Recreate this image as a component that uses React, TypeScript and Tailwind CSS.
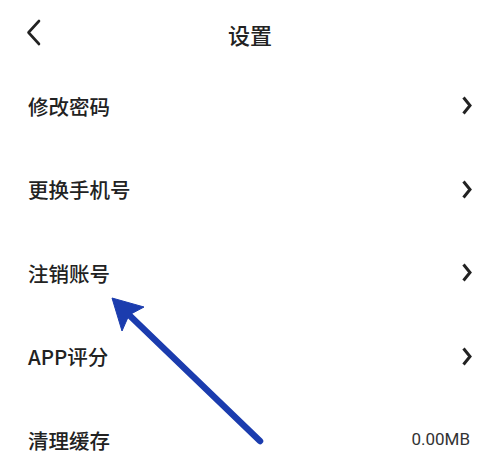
import React from "react";

const cjk = { fontFamily: '"Noto Sans CJK SC", "Noto Sans", sans-serif' };

function ChevronRight() {
  return (
    <svg width="10" height="19" viewBox="0 0 10 19" className="shrink-0">
      <path d="M1.5 1.5 L8 9.5 L1.5 17.5" fill="none" stroke="#222" strokeWidth="3" strokeLinejoin="miter" strokeLinecap="butt" />
    </svg>
  );
}

type Item = { label: string; value?: string };

const items: Item[] = [
  { label: "修改密码" },
  { label: "更换手机号" },
  { label: "注销账号" },
  { label: "APP评分" },
  { label: "清理缓存", value: "0.00MB" },
];

export default function App() {
  return (
    <div className="relative w-[500px] h-[476px] bg-white overflow-hidden" style={cjk}>
      {/* header */}
      <div className="relative h-[64px] flex items-center justify-center pt-1">
        <svg width="16" height="27" viewBox="0 0 16 27" className="absolute left-[26px] top-[19px]">
          <path d="M13 2 L2.5 13.5 L13 25" fill="none" stroke="#222" strokeWidth="2.6" strokeLinecap="round" strokeLinejoin="round" />
        </svg>
        <span className="text-[22px] text-[#222] font-medium leading-none">设置</span>
      </div>

      {/* list */}
      <div className="flex flex-col">
        {items.map((it) => (
          <div key={it.label} className="h-[83.5px] flex items-center justify-between px-7">
            <span className="text-[20.5px] leading-none text-[#222] font-medium">{it.label}</span>
            {it.value ? (
              <span
                className="text-[17px] leading-none text-[#333] pr-[2px]"
                style={{ fontFamily: 'Roboto, "Noto Sans", sans-serif' }}
              >
                {it.value}
              </span>
            ) : (
              <ChevronRight />
            )}
          </div>
        ))}
      </div>

      {/* annotation arrow */}
      <svg width="500" height="476" viewBox="0 0 500 476" className="absolute inset-0 pointer-events-none">
        <line x1="260" y1="441" x2="126" y2="312" stroke="#1b3cae" strokeWidth="6.5" strokeLinecap="round" />
        <path d="M112 298 L144 307 L129 315 L122 331 Z" fill="#1b3cae" stroke="#1b3cae" strokeWidth="1" strokeLinejoin="miter" />
      </svg>
    </div>
  );
}
